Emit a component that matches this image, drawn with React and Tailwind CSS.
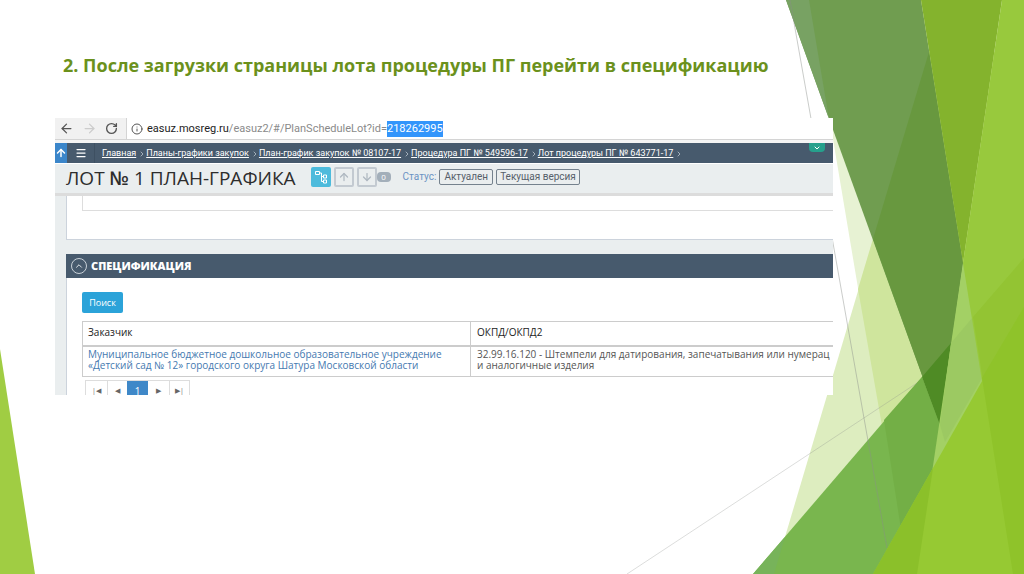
import React from 'react';
import { ArrowLeft, ArrowRight, ArrowUp, ArrowDown, RotateCw, Info, Menu, ChevronUp, ChevronDown, ChevronRight } from 'lucide-react';

const crumbs = [
  'Главная',
  'Планы-графики закупок',
  'План-график закупок № 08107-17',
  'Процедура ПГ № 549596-17',
  'Лот процедуры ПГ № 643771-17',
];

function Backdrop() {
  return (
    <svg className="absolute inset-0 -z-10 h-full w-full" viewBox="0 0 1024 574" preserveAspectRatio="none" aria-hidden="true">
      <polygon points="0,349 35,574 0,574" fill="#a0cd43" />

      {/* pale shards */}
      <polygon points="833,139 906,574 1024,574 1024,0 833,0" fill="#e7f2d3" />
      <polygon points="929,52 774,574 1024,574 1024,52" fill="#ddedbf" />
      <polygon points="929,52 858,289 908,574 1024,574 1024,52" fill="#cfe59d" />

      {/* dark shard */}
      <polygon points="786,0 921,0 963,263 940,425" fill="#709d50" />
      <polygon points="786,0 809,0 829,119" fill="#78a263" />
      <polygon points="929,52 873,239 940,425 963,263" fill="#68983f" />

      {/* middle green */}
      <polygon points="753,574 922,377 940,425 940,574" fill="#79b64e" />
      <polygon points="753,574 785,537 774,574" fill="#77b35a" />
      <polygon points="884,420 922,377 940,425 940,574 908,574" fill="#73af46" />
      <polygon points="922,377 951,343 940,425" fill="#4f8b25" />

      {/* right limes */}
      <polygon points="963,263 917,574 1024,574 1024,263" fill="#a3d065" />
      <polygon points="951,343 973,317 982,378 945,442 940,425" fill="#9cc962" />
      <polygon points="921,0 1002,0 963,263" fill="#84b32d" />
      <polygon points="1002,0 1024,0 1024,574 1013,574 963,263" fill="#98c93d" />
      <polygon points="973,317 1024,258 1024,574 1013,574" fill="#93c433" />

      {/* bottom lime */}
      <polygon points="873,574 1024,307 1024,574" fill="#96c933" />
      <polygon points="873,574 933,468 917,574" fill="#8bc02a" />
      <polygon points="982,378 1024,307 1024,574 1013,574" fill="#8fc32a" />

      <g stroke="#8a8f8a" strokeOpacity="0.45" fill="none">
        <path d="M790 0 887 548" />
        <path d="M627 574 917 383" strokeOpacity="0.3" />
      </g>
    </svg>
  );
}

function BrowserBar() {
  return (
    <div className="flex h-[22px] items-stretch border-b border-[#d4d4d4] bg-white">
      <div className="flex w-[72px] items-center gap-2 border-r border-[#d4d4d4] bg-[#f1f1f1] pl-1 text-[#555]">
        <button aria-label="Назад"><ArrowLeft size={15} /></button>
        <button aria-label="Вперёд" className="text-[#ccc]"><ArrowRight size={15} /></button>
        <button aria-label="Обновить"><RotateCw size={13} strokeWidth={2.5} /></button>
      </div>
      <div className="flex items-center pl-1 font-['Roboto','Open_Sans',sans-serif] text-[11px] leading-4 text-[#8a8a8a]">
        <Info size={12} className="mr-1 text-[#555]" />
        <span className="text-[#222]">easuz.mosreg.ru</span>
        <span>/easuz2/#/PlanScheduleLot?id=</span>
        <span className="bg-[#3395fb] text-white">218262995</span>
      </div>
    </div>
  );
}

function Breadcrumbs() {
  return (
    <nav className="flex h-5 bg-[#475a6d] font-['Roboto','Open_Sans',sans-serif] text-[9px] leading-5 text-white">
      <button aria-label="Наверх" className="flex w-3 items-center justify-center bg-[#3b86ca]">
        <ArrowUp size={12} strokeWidth={3} />
      </button>
      <button aria-label="Меню" className="flex w-7 items-center justify-center border-r border-[#3e5062]">
        <Menu size={12} strokeWidth={2.5} />
      </button>
      <ol className="flex grow pl-[7px]">
        {crumbs.map((c) => (
          <li key={c} className="flex items-center whitespace-nowrap">
            <a href="#" className="underline">{c}</a>
            <ChevronRight size={8} strokeWidth={3} className="ml-0.5 mt-0.5 text-[#a3afba]" />
          </li>
        ))}
      </ol>
      <button aria-label="Развернуть" className="mr-2 flex h-[9px] w-4 items-center justify-center rounded-b-sm bg-[#26a08c]">
        <ChevronDown size={8} strokeWidth={3} />
      </button>
    </nav>
  );
}

function LotHeader() {
  return (
    <header className="flex h-[30px] items-center border-t border-white bg-[#eaeeef] pl-[11px] text-[#2d2d2d]">
      <h2 className="mb-0.5 whitespace-nowrap text-[19px] font-medium leading-7">ЛОТ <span className="font-semibold">№</span> 1 ПЛАН-ГРАФИКА</h2>
      <div className="mb-1 ml-[15px] flex items-center gap-[3px]">
        <button aria-label="Дерево" className="flex size-5 items-center justify-center rounded-xs bg-[#4dbbdc] text-white">
          <svg width="14" height="14" viewBox="0 0 14 14" fill="none" stroke="currentColor">
            <path d="M1.5 1.5h4v3h-4zM5.5 3h2v8.5h2M7.5 6.5h2M9.5 5h3v3h-3zM9.5 10h3v3h-3z" />
          </svg>
        </button>
        <button aria-label="Вверх" className="flex size-5 items-center justify-center rounded-xs border-2 border-[#c3cad1] text-[#afb8c1]">
          <ArrowUp size={12} strokeWidth={2.5} />
        </button>
        <div className="flex items-center">
          <button aria-label="Вниз" className="flex size-5 items-center justify-center rounded-xs border-2 border-[#c3cad1] text-[#afb8c1]">
            <ArrowDown size={12} strokeWidth={2.5} />
          </button>
          <span className="h-2.5 w-3.5 rounded-sm bg-[#a3afba] text-center text-[8px] leading-[10px] text-white">0</span>
        </div>
      </div>
      <div className="mb-1 ml-3 flex items-center gap-[3px] whitespace-nowrap font-['Roboto','Open_Sans',sans-serif] text-[10px] leading-[14px] text-[#56606a]">
        <span className="text-[#6b93c4]">Статус:</span>
        <span className="rounded-xs border border-[#75828e] px-1">Актуален</span>
        <span className="rounded-xs border border-[#75828e] px-[3px]">Текущая версия</span>
      </div>
    </header>
  );
}

function Pager() {
  return (
    <div className="ml-[3px] mt-[3px] flex h-[15px] w-fit items-start overflow-hidden border-x border-t border-[#ddd] text-[7px] leading-5 text-[#666]">
      <button aria-label="Первая" className="h-5 w-[21px]">|◀</button>
      <button aria-label="Предыдущая" className="h-5 w-5 border-l border-[#ddd]">◀</button>
      <button className="h-5 w-[21px] bg-[#3f88c8] text-[10px] text-white">1</button>
      <button aria-label="Следующая" className="h-5 w-[21px]">▶</button>
      <button aria-label="Последняя" className="h-5 w-5 border-l border-[#ddd]">▶|</button>
    </div>
  );
}

function Specification() {
  return (
    <section className="mt-[14px]">
      <div className="flex h-6 items-center gap-1 bg-[#475a6d] pl-[5px] text-white">
        <button aria-label="Свернуть" className="flex size-4 items-center justify-center rounded-full border border-[#c9d1d8]">
          <ChevronUp size={10} />
        </button>
        <h3 className="text-[11px] font-extrabold leading-4">СПЕЦИФИКАЦИЯ</h3>
      </div>
      <div className="border-l border-[#ccd3dc] bg-white pl-[15px] pt-[14px]">
        <button className="block h-[21px] w-[41px] rounded-xs bg-[#2ba3d9] text-[9px] text-white">Поиск</button>
        <table className="mt-2 w-full table-fixed border-collapse whitespace-nowrap text-left text-[10px] leading-[11px]">
          <thead>
            <tr className="h-6 border-y border-[#ccc] border-b-2 text-[#222]">
              <th className="w-[388px] border-x border-[#ccc] px-[5px] pb-0.5 font-normal">Заказчик</th>
              <th className="px-[6px] pb-0.5 font-normal">ОКПД/ОКПД2</th>
            </tr>
          </thead>
          <tbody>
            <tr className="h-[31px] border-b border-[#ccc]">
              <td className="border-x border-[#ccc] px-[5px] pb-0.5">
                <a href="#" className="text-[#4579b0]">
                  Муниципальное бюджетное дошкольное образовательное учреждение<br />
                  «Детский сад № 12» городского округа Шатура Московской области
                </a>
              </td>
              <td className="overflow-hidden px-[6px] pb-0.5 text-[#555]">
                32.99.16.120 - Штемпели для датирования, запечатывания или нумерац<br />
                и аналогичные изделия
              </td>
            </tr>
          </tbody>
        </table>
        <Pager />
      </div>
    </section>
  );
}

function App() {
  return (
    <main className="relative isolate min-h-screen overflow-hidden bg-white pl-[55px] pt-[51px] font-['Open_Sans','Noto_Sans',sans-serif]">
      <Backdrop />
      <h1 className="whitespace-nowrap pl-2 text-[18px] font-bold leading-7 text-[#6b911c]">
        2. После загрузки страницы лота процедуры ПГ перейти в спецификацию
      </h1>
      <div className="mt-[39px] w-[80.3%] overflow-hidden bg-white">
        <BrowserBar />
        <div className="h-[3px] bg-[#f4f4f4]" />
        <Breadcrumbs />
        <LotHeader />
        <div className="h-[3px] bg-[#dcdcdc]" />
        <div className="bg-[#eaeeef] pl-[11px]">
          <div className="h-[44px] border-b border-l border-[#ccd3dc] bg-white pl-[15px]">
            <div className="h-[15px] border-b border-l border-[#ddd]" />
          </div>
          <Specification />
        </div>
      </div>
    </main>
  );
}

export default App;
